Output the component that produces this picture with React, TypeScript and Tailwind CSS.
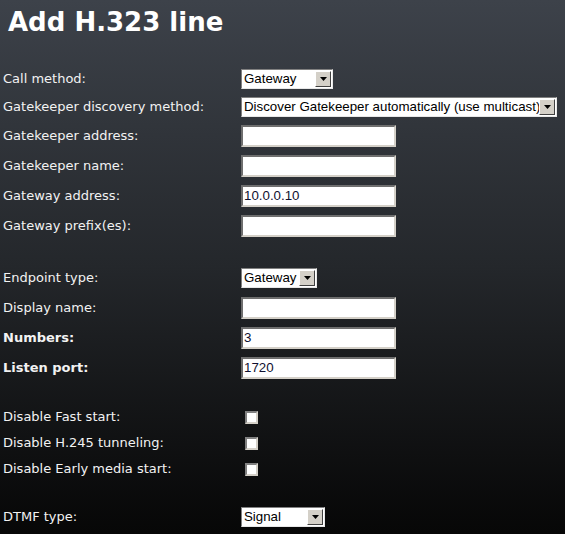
import React from "react";

const labelFont = { fontFamily: '"DejaVu Sans", Verdana, sans-serif' };

function Select({ value, width }: { value: string; width: number }) {
  return (
    <div
      className="flex h-[20px] items-stretch bg-white border border-t-[#808080] border-l-[#808080] border-b-[#e8e8e8] border-r-[#e8e8e8]"
      style={{ width }}
    >
      <div className="flex-1 flex items-center pl-[2px] text-[13.3px] text-black leading-none overflow-hidden whitespace-nowrap font-['Liberation_Sans',Arial,sans-serif]">
        {value}
      </div>
      <div className="w-[16px] my-[1px] mr-[1px] bg-[#d4d0c8] border border-t-white border-l-white border-b-[#404040] border-r-[#404040] flex items-center justify-center">
        <svg width="7" height="4" viewBox="0 0 7 4">
          <polygon points="0,0 7,0 3.5,4" fill="#000" />
        </svg>
      </div>
    </div>
  );
}

function TextInput({ value }: { value?: string }) {
  return (
    <div className="w-[155px] h-[22px] bg-white border-2 border-t-[#6e6e6e] border-l-[#6e6e6e] border-b-[#d4d0c8] border-r-[#d4d0c8] flex items-center pl-[1px] text-[13.3px] text-[#101030] leading-none font-['Liberation_Sans',Arial,sans-serif]">
      {value}
    </div>
  );
}

function Checkbox() {
  return (
    <div className="ml-[4px] w-[13px] h-[13px] bg-white border-2 border-t-[#808080] border-l-[#808080] border-b-[#d4d0c8] border-r-[#d4d0c8]" />
  );
}

function Row({
  label,
  bold,
  h,
  children,
}: {
  label: string;
  bold?: boolean;
  h: string;
  children: React.ReactNode;
}) {
  return (
    <div className={`flex items-center ${h}`}>
      <div
        className={`w-[241px] pl-[3px] text-[13px] text-[#f2f2f2] ${bold ? "font-bold" : ""}`}
        style={labelFont}
      >
        {label}
      </div>
      {children}
    </div>
  );
}

export default function App() {
  return (
    <div className="w-[565px] h-[534px] overflow-hidden bg-gradient-to-b from-[#3d424a] via-[#24272b] to-[#070707]">
      <div className="h-[65px] pl-[8px] pt-[3px]">
        <h1
          className="text-[26px] font-bold text-white leading-[38px]"
          style={labelFont}
        >
          Add H.323 line
        </h1>
      </div>
      <Row label="Call method:" h="h-[28px]">
        <Select value="Gateway" width={92} />
      </Row>
      <Row label="Gatekeeper discovery method:" h="h-[28px]">
        <Select value="Discover Gatekeeper automatically (use multicast)" width={316} />
      </Row>
      <Row label="Gatekeeper address:" h="h-[30px]">
        <TextInput />
      </Row>
      <Row label="Gatekeeper name:" h="h-[30px]">
        <TextInput />
      </Row>
      <Row label="Gateway address:" h="h-[30px]">
        <TextInput value="10.0.0.10" />
      </Row>
      <Row label="Gateway prefix(es):" h="h-[30px]">
        <TextInput />
      </Row>
      <div className="h-[22px]" />
      <Row label="Endpoint type:" h="h-[30px]">
        <Select value="Gateway" width={76} />
      </Row>
      <Row label="Display name:" h="h-[30px]">
        <TextInput />
      </Row>
      <Row label="Numbers:" bold h="h-[30px]">
        <TextInput value="3" />
      </Row>
      <Row label="Listen port:" bold h="h-[30px]">
        <TextInput value="1720" />
      </Row>
      <div className="h-[21px]" />
      <Row label="Disable Fast start:" h="h-[26px]">
        <Checkbox />
      </Row>
      <Row label="Disable H.245 tunneling:" h="h-[26px]">
        <Checkbox />
      </Row>
      <Row label="Disable Early media start:" h="h-[26px]">
        <Checkbox />
      </Row>
      <div className="h-[20px]" />
      <Row label="DTMF type:" h="h-[30px]">
        <Select value="Signal" width={84} />
      </Row>
    </div>
  );
}
